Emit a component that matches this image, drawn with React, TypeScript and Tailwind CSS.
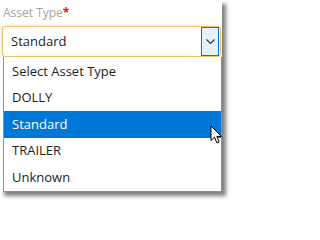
import React from "react";

const OPTIONS = ["Select Asset Type", "DOLLY", "Standard", "TRAILER", "Unknown"];
const SELECTED = "Standard";

// Flecha del ratón encima de la opción resaltada.
function Cursor() {
  return (
    <svg
      className="absolute left-[210px] top-[125px]"
      width="13"
      height="20"
      viewBox="0 0 13 20"
    >
      <path
        d="M1 1 L1 15.5 L4.5 12.2 L7 18 L9.2 17 L6.8 11.4 L11.5 11.4 Z"
        fill="#fff"
        stroke="#000"
        strokeWidth="1"
        strokeLinejoin="miter"
      />
    </svg>
  );
}

export default function App() {
  return (
    <div className="w-[234px] h-[205px] bg-white font-['Open_Sans',sans-serif]">
      <div className="relative w-[222px] h-[192px] bg-white shadow-[4px_4px_4px_rgba(0,0,0,0.5)]">
        <div className="pl-[3px] pt-[5px] h-[26px] text-[12px] leading-[16px] text-[#a3a3a3]">
          Asset Type<span className="text-[#e3102b] font-bold">*</span>
        </div>

        <div className="ml-[2px] w-[219px] h-[31px] flex items-stretch border border-[#efc06a] rounded-[3px] shadow-[0_0_3px_rgba(240,175,70,0.45)] bg-white">
          <div className="flex-1 flex items-center pl-[8px] text-[13px] text-[#1e1e1e]">
            {SELECTED}
          </div>
          <div className="w-[18px] mr-[1px] flex items-center justify-center bg-[#e5f1fb] border border-[#0078d7]">
            <svg width="9" height="5" viewBox="0 0 9 5">
              <polyline
                points="0.5,0.5 4.5,4.5 8.5,0.5"
                fill="none"
                stroke="#333"
                strokeWidth="1.1"
              />
            </svg>
          </div>
        </div>

        <div className="ml-[3px] w-[219px] border border-t-0 border-[#8f8f8f] bg-white pt-[1px]">
          {OPTIONS.map((o) => (
            <div
              key={o}
              className={
                o === SELECTED
                  ? "h-[26.5px] flex items-center pl-[8px] text-[13px] bg-[#0078d7] text-white"
                  : "h-[26.5px] flex items-center pl-[8px] text-[13px] text-[#1e1e1e]"
              }
            >
              {o}
            </div>
          ))}
        </div>

        <Cursor />
      </div>
    </div>
  );
}
